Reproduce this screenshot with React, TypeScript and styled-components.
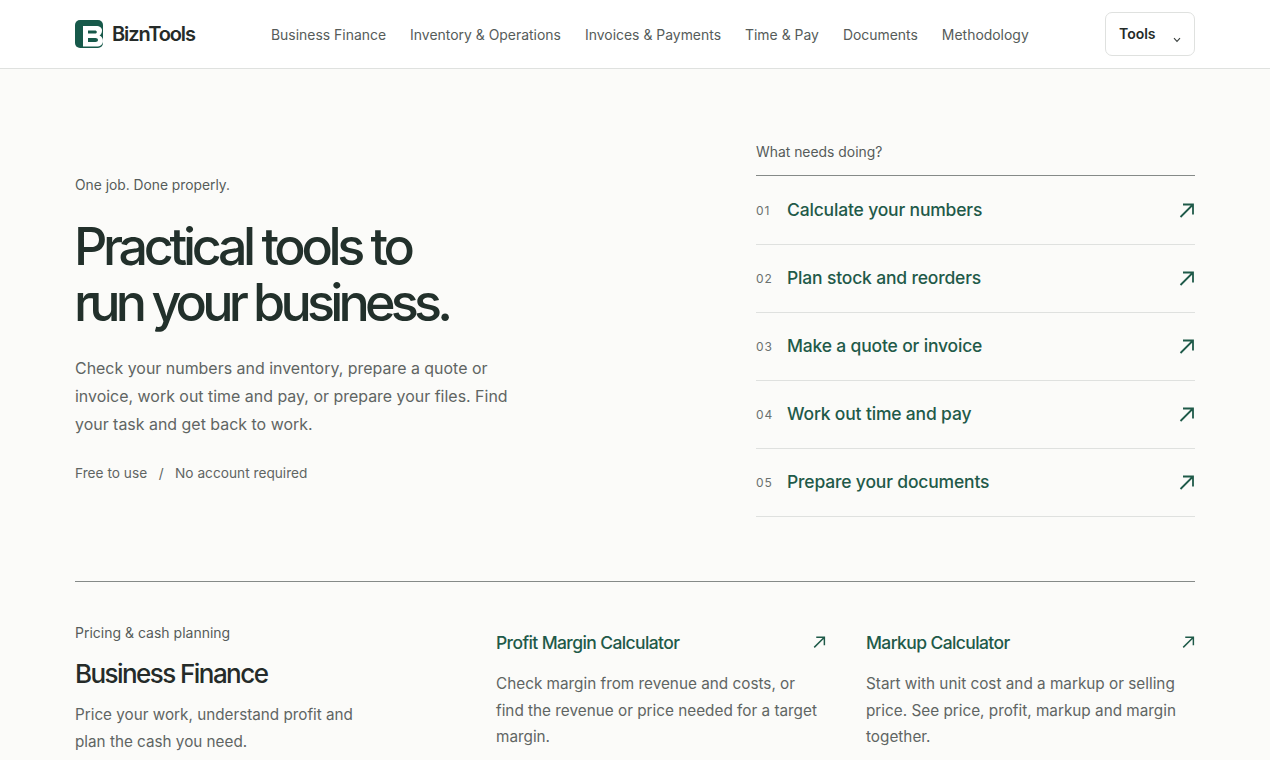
import { createGlobalStyle } from 'styled-components';
import styled from 'styled-components';

const GlobalStyle = createGlobalStyle`
    html, body {
        margin: 0;
        height: 760px;
        overflow: hidden;
        background: #fbfbf9;
        font-family: Inter, 'Liberation Sans', sans-serif;
        -webkit-font-smoothing: antialiased;
    }
    * {
        box-sizing: border-box;
    }
`;

const Header = styled.header`
    height: 69px;
    background: #ffffff;
    border-bottom: 1px solid #dfe1df;
`;

const HeaderInner = styled.div`
    width: 1120px;
    height: 68px;
    margin: 0 auto;
    display: flex;
    align-items: center;
`;

const Brand = styled.a`
    display: flex;
    align-items: center;
    gap: 9px;
    width: 196px;
    font-size: 20px;
    font-weight: 600;
    letter-spacing: -0.055em;
    color: #252b29;
`;

const Nav = styled.nav`
    display: flex;
    gap: 24px;
    flex: 1;
`;

const NavLink = styled.a`
    font-size: 13.95px;
    line-height: 17px;
    color: #565c5a;
`;

const ToolsButton = styled.button`
    width: 90px;
    height: 44px;
    padding: 0 13px 2px;
    display: flex;
    align-items: center;
    justify-content: space-between;
    background: #ffffff;
    border: 1px solid #dfe1df;
    border-radius: 7px;
    font: 600 14px Inter, sans-serif;
    color: #252b29;
`;

const ChevronIcon = styled.svg`
    margin-top: 13px;
`;

const Main = styled.main`
    width: 1120px;
    margin: 0 auto;
`;

const Hero = styled.section`
    display: grid;
    grid-template-columns: 1fr 439px;
    height: 513px;
    padding-top: 71px;
    border-bottom: 1px solid #858a88;
`;

const HeroText = styled.div`
    padding-top: 37px;
`;

const Eyebrow = styled.p`
    margin: 0;
    font-size: 13.8px;
    line-height: 17px;
    color: #565c5a;
`;

const Title = styled.h1`
    margin: 25px 0 0 -1px;
    font-size: 52px;
    line-height: 56px;
    font-weight: 500;
    color: #22302b;
`;

const TitleLine = styled.span<{ $tracking: number }>`
    display: block;
    letter-spacing: ${(props) => props.$tracking}em;
`;

const Lead = styled.p`
    margin: 24px 0 0;
    width: 440px;
    font-size: 15.95px;
    line-height: 28px;
    color: #5f6563;
`;

const Notes = styled.div`
    margin-top: 26px;
    display: flex;
    gap: 11.5px;
    font-size: 13.7px;
    line-height: 17px;
    color: #5f6563;
`;

const Panel = styled.div``;

const PanelLabel = styled.div`
    height: 36px;
    margin-bottom: 1px;
    border-bottom: 1px solid #858a88;
    font-size: 13.9px;
    line-height: 24px;
    color: #565c5a;
`;

const TaskRow = styled.a`
    height: 68px;
    padding-bottom: 2px;
    display: flex;
    align-items: center;
    border-bottom: 1px solid #dfe1df;
`;

const TaskNumber = styled.span`
    width: 31px;
    margin-top: 1px;
    font-size: 12px;
    letter-spacing: 0.08em;
    color: #6b716f;
`;

const TaskName = styled.span`
    flex: 1;
    font-size: 17.5px;
    font-weight: 500;
    letter-spacing: -0.01em;
    color: #1f5a49;
`;

const TaskArrow = styled.span`
    display: flex;
    margin-top: 2px;
`;

const Tools = styled.section`
    display: grid;
    grid-template-columns: 381px 330px 329px;
    column-gap: 40px;
    padding-top: 42px;
`;

const GroupIntro = styled.div``;

const GroupLabel = styled.p`
    margin: 0;
    font-size: 14px;
    line-height: 17px;
    color: #565c5a;
`;

const GroupTitle = styled.h2`
    margin: 16px 0 0;
    font-size: 26px;
    line-height: 34px;
    font-weight: 500;
    letter-spacing: -0.06em;
    color: #252b29;
`;

const GroupText = styled.p`
    margin: 10px 0 0;
    width: 300px;
    font-size: 15.25px;
    line-height: 27px;
    color: #5f6563;
`;

const ToolCard = styled.article`
    padding-top: 8px;
`;

const ToolHead = styled.div`
    display: flex;
    justify-content: space-between;
    align-items: center;
    height: 20px;
`;

const ToolName = styled.h3`
    margin: 0;
    font-size: 17.5px;
    font-weight: 500;
    letter-spacing: -0.035em;
    color: #1f5a49;
`;

const ToolText = styled.p`
    margin: 19px 0 0;
    font-size: 15.3px;
    line-height: 26.5px;
    color: #5f6563;
`;

const Logo = () => (
    <svg width="28" height="28" viewBox="0 0 28 28">
        <rect width="28" height="28" rx="5" fill="#17594a" />
        <path
            fillRule="evenodd"
            fill="#ffffff"
            d="M8 6H21C25 6 27 8 27 10.5C27 13 26 14.5 24.5 15.5C26.5 16.5 28 18 28 21C28 24.5 25.5 26.5 21.5 26.5H8ZM13 10.5V13.5H20C21 13.5 21.8 13 21.8 12C21.8 11 21 10.5 20 10.5ZM13 18V22H20.5C22 22 23 21.2 23 20C23 18.8 22 18 20.5 18Z"
        />
    </svg>
);

const Arrow = ({ size }: { size: number }) => (
    <svg width={size} height={size} viewBox="0 0 16 16" fill="none" stroke="#1f5a49" strokeWidth="1.8">
        <path d="M1.5 14 14 1.5M4 1.5H14V11.5" />
    </svg>
);

const Chevron = () => (
    <ChevronIcon width="8" height="6" viewBox="0 0 8 6" fill="none" stroke="#3a403e" strokeWidth="1.1">
        <path d="M1 1.2 4 4.4 7 1.2" />
    </ChevronIcon>
);

const navItems = ['Business Finance', 'Inventory & Operations', 'Invoices & Payments', 'Time & Pay', 'Documents', 'Methodology'];

const tasks = ['Calculate your numbers', 'Plan stock and reorders', 'Make a quote or invoice', 'Work out time and pay', 'Prepare your documents'];

const App = () => {
    return (
        <>
            <GlobalStyle />
            <Header>
                <HeaderInner>
                    <Brand>
                        <Logo />
                        BiznTools
                    </Brand>
                    <Nav>
                        {navItems.map((item) => (
                            <NavLink key={item}>{item}</NavLink>
                        ))}
                    </Nav>
                    <ToolsButton>
                        Tools
                        <Chevron />
                    </ToolsButton>
                </HeaderInner>
            </Header>
            <Main>
                <Hero>
                    <HeroText>
                        <Eyebrow>One job. Done properly.</Eyebrow>
                        <Title>
                            <TitleLine $tracking={-0.083}>Practical tools to</TitleLine>
                            <TitleLine $tracking={-0.092}>run your business.</TitleLine>
                        </Title>
                        <Lead>
                            Check your numbers and inventory, prepare a quote or invoice, work out time and pay, or prepare your files. Find your task and get back to work.
                        </Lead>
                        <Notes>
                            <span>Free to use</span>
                            <span>/</span>
                            <span>No account required</span>
                        </Notes>
                    </HeroText>
                    <Panel>
                        <PanelLabel>What needs doing?</PanelLabel>
                        {tasks.map((task, i) => (
                            <TaskRow key={task}>
                                <TaskNumber>0{i + 1}</TaskNumber>
                                <TaskName>{task}</TaskName>
                                <TaskArrow>
                                    <Arrow size={16} />
                                </TaskArrow>
                            </TaskRow>
                        ))}
                    </Panel>
                </Hero>
                <Tools>
                    <GroupIntro>
                        <GroupLabel>Pricing &amp; cash planning</GroupLabel>
                        <GroupTitle>Business Finance</GroupTitle>
                        <GroupText>Price your work, understand profit and plan the cash you need.</GroupText>
                    </GroupIntro>
                    <ToolCard>
                        <ToolHead>
                            <ToolName>Profit Margin Calculator</ToolName>
                            <Arrow size={13} />
                        </ToolHead>
                        <ToolText>Check margin from revenue and costs, or find the revenue or price needed for a target margin.</ToolText>
                    </ToolCard>
                    <ToolCard>
                        <ToolHead>
                            <ToolName>Markup Calculator</ToolName>
                            <Arrow size={13} />
                        </ToolHead>
                        <ToolText>Start with unit cost and a markup or selling price. See price, profit, markup and margin together.</ToolText>
                    </ToolCard>
                </Tools>
            </Main>
        </>
    );
};

export default App;
